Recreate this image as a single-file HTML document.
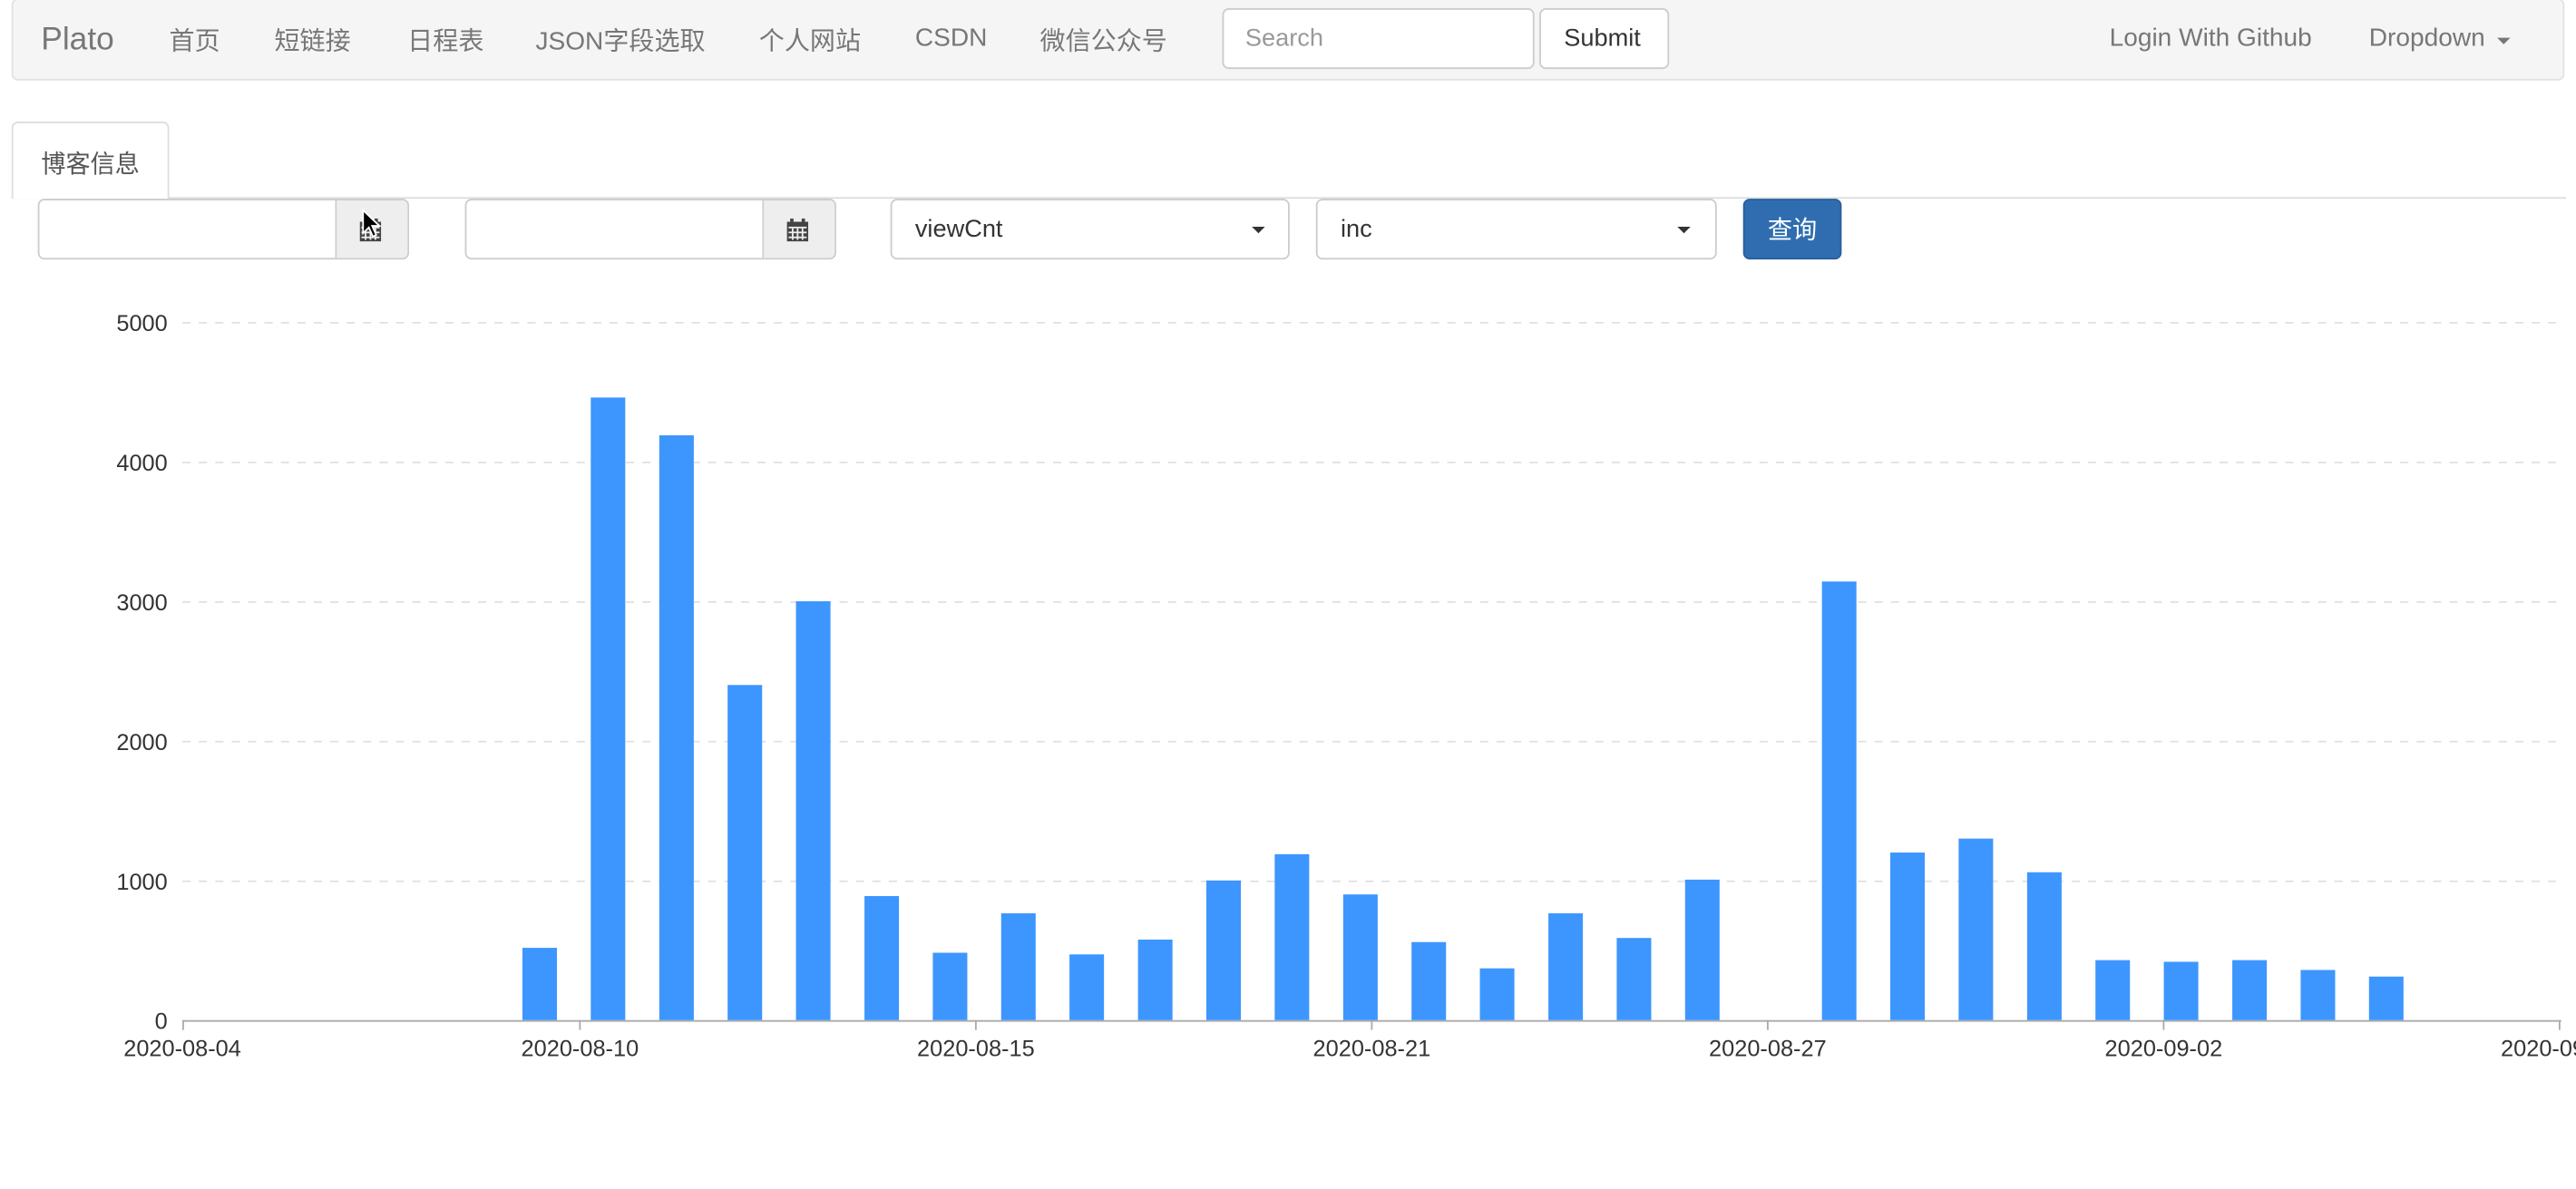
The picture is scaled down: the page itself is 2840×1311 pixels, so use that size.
<!DOCTYPE html>
<html><head><meta charset="utf-8"><style>
html,body{margin:0;padding:0;background:#fff;width:2840px;height:1310px;overflow:hidden}
#w{position:absolute;left:0;top:0;width:1568px;height:724px;transform:scale(1.81122);transform-origin:0 0;font-family:"Liberation Sans","Noto Sans CJK SC",sans-serif;color:#333}
.a{position:absolute}
.nav{left:7px;top:-1px;width:1554px;height:50px;background:#f5f5f5;border:1px solid #e2e2e2;border-radius:4px;box-sizing:border-box}
.l{position:absolute;top:13px;font-size:15.5px;color:#777;white-space:nowrap}
.lt{top:15px}
.box{position:absolute;border:1px solid #ccc;border-radius:4px;box-sizing:border-box;background:#fff}
.add{position:absolute;top:0;bottom:0;right:0;width:43px;background:#eee;border-left:1px solid #ccc;border-radius:0 3px 3px 0}
.caret{position:absolute;width:0;height:0;border-left:4px solid transparent;border-right:4px solid transparent;border-top:4px solid #333}
</style></head><body><div id="w">
<div class="a nav"></div>
<div class="l" style="left:25px;top:13px;font-size:19.5px">Plato</div>
<div class="l" style="left:103px">首页</div>
<div class="l" style="left:167px">短链接</div>
<div class="l" style="left:248px">日程表</div>
<div class="l" style="left:326px">JSON字段选取</div>
<div class="l" style="left:462px">个人网站</div>
<div class="l lt" style="left:557px">CSDN</div>
<div class="l" style="left:633px">微信公众号</div>
<div class="box" style="left:744px;top:5px;width:190px;height:37px"><span class="a" style="left:13px;top:9px;font-size:15px;color:#999">Search</span></div>
<div class="box" style="left:937px;top:5px;width:79px;height:37px"><span class="a" style="left:14px;top:9px;font-size:15px;color:#333">Submit</span></div>
<div class="l lt" style="left:1284px">Login With Github</div>
<div class="l lt" style="left:1442px">Dropdown</div>
<div class="caret" style="left:1520px;top:23px;border-top-color:#777"></div>

<div class="a" style="left:7px;top:120px;width:1555px;border-top:1px solid #ddd"></div>
<div class="a" style="left:7px;top:74px;width:96px;height:47px;background:#fff;border:1px solid #ddd;border-bottom:none;border-radius:4px 4px 0 0;box-sizing:border-box"><span class="a" style="left:17px;top:14px;font-size:15px;color:#555">博客信息</span></div>

<div class="box" style="left:23px;top:121px;width:226px;height:37px"><div class="add"><svg class="a" style="left:14px;top:11px" width="13" height="14" viewBox="0 0 13 14"><rect x="0" y="2" width="13" height="12" fill="#444"/><rect x="2" y="0" width="2" height="3" fill="#444"/><rect x="9" y="0" width="2" height="3" fill="#444"/><g fill="#eee"><rect x="1" y="5" width="11" height="1"/><rect x="3" y="6" width="1" height="7"/><rect x="6" y="6" width="1" height="7"/><rect x="9" y="6" width="1" height="7"/><rect x="1" y="8" width="11" height="1"/><rect x="1" y="11" width="11" height="1"/></g></svg><svg class="a" style="left:15px;top:5px" width="14" height="20" viewBox="0 0 14 20"><path d="M1 1 L1 15 L4.5 11.5 L7 17 L9 16 L6.5 10.5 L11 10.5 Z" fill="#000" stroke="#fff" stroke-width="1"/></svg></div></div>
<div class="box" style="left:283px;top:121px;width:226px;height:37px"><div class="add"><svg class="a" style="left:14px;top:11px" width="13" height="14" viewBox="0 0 13 14"><rect x="0" y="2" width="13" height="12" fill="#444"/><rect x="2" y="0" width="2" height="3" fill="#444"/><rect x="9" y="0" width="2" height="3" fill="#444"/><g fill="#eee"><rect x="1" y="5" width="11" height="1"/><rect x="3" y="6" width="1" height="7"/><rect x="6" y="6" width="1" height="7"/><rect x="9" y="6" width="1" height="7"/><rect x="1" y="8" width="11" height="1"/><rect x="1" y="11" width="11" height="1"/></g></svg></div></div>
<div class="box" style="left:542px;top:121px;width:243px;height:37px"><span class="a" style="left:14px;top:9px;font-size:15px">viewCnt</span><div class="caret" style="left:219px;top:16px"></div></div>
<div class="box" style="left:801px;top:121px;width:244px;height:37px"><span class="a" style="left:14px;top:9px;font-size:15px">inc</span><div class="caret" style="left:219px;top:16px"></div></div>
<div class="a" style="left:1061px;top:121px;width:60px;height:37px;background:#2f6db0;border:1px solid #2a5f9a;border-radius:4px;box-sizing:border-box"><span class="a" style="left:14px;top:7px;font-size:15px;color:#fff">查询</span></div>

<svg class="a" style="left:0;top:0" width="1568" height="724" viewBox="0 0 1568 724" font-family="Liberation Sans, sans-serif" font-size="14" fill="#333">
<g stroke="#e0e0e0" stroke-dasharray="5,5"><line x1="111" y1="196.5" x2="1560" y2="196.5"/><line x1="111" y1="281.5" x2="1560" y2="281.5"/><line x1="111" y1="366.5" x2="1560" y2="366.5"/><line x1="111" y1="451.5" x2="1560" y2="451.5"/><line x1="111" y1="536.5" x2="1560" y2="536.5"/></g>
<g text-anchor="end"><text x="102" y="201.5">5000</text><text x="102" y="286.5">4000</text><text x="102" y="371.5">3000</text><text x="102" y="456.5">2000</text><text x="102" y="541.5">1000</text><text x="102" y="626.5">0</text></g>
<line x1="111" y1="621.5" x2="1559" y2="621.5" stroke="#aaa"/>
<g stroke="#aaa"><line x1="111.5" y1="621" x2="111.5" y2="627"/><line x1="353" y1="621" x2="353" y2="627"/><line x1="594" y1="621" x2="594" y2="627"/><line x1="835" y1="621" x2="835" y2="627"/><line x1="1076" y1="621" x2="1076" y2="627"/><line x1="1317" y1="621" x2="1317" y2="627"/><line x1="1558" y1="621" x2="1558" y2="627"/></g>
<g text-anchor="middle"><text x="111" y="643">2020-08-04</text><text x="353" y="643">2020-08-10</text><text x="594" y="643">2020-08-15</text><text x="835" y="643">2020-08-21</text><text x="1076" y="643">2020-08-27</text><text x="1317" y="643">2020-09-02</text><text x="1558" y="643">2020-09-08</text></g>
<g fill="#3d96fe">
<rect x="318" y="577" width="21" height="44"/>
<rect x="359.6" y="242" width="21" height="379"/>
<rect x="401.3" y="265" width="21" height="356"/>
<rect x="442.9" y="417" width="21" height="204"/>
<rect x="484.5" y="366" width="21" height="255"/>
<rect x="526.2" y="545.5" width="21" height="75.5"/>
<rect x="567.8" y="580" width="21" height="41"/>
<rect x="609.4" y="556" width="21" height="65"/>
<rect x="651" y="581" width="21" height="40"/>
<rect x="692.7" y="572" width="21" height="49"/>
<rect x="734.3" y="536" width="21" height="85"/>
<rect x="775.9" y="520" width="21" height="101"/>
<rect x="817.6" y="544.5" width="21" height="76.5"/>
<rect x="859.2" y="573.5" width="21" height="47.5"/>
<rect x="900.8" y="589.5" width="21" height="31.5"/>
<rect x="942.5" y="556" width="21" height="65"/>
<rect x="984.1" y="571" width="21" height="50"/>
<rect x="1025.7" y="535.5" width="21" height="85.5"/>
<rect x="1109" y="354" width="21" height="267"/>
<rect x="1150.6" y="519" width="21" height="102"/>
<rect x="1192.2" y="510.5" width="21" height="110.5"/>
<rect x="1233.9" y="531" width="21" height="90"/>
<rect x="1275.5" y="584.5" width="21" height="36.5"/>
<rect x="1317.1" y="585.5" width="21" height="35.5"/>
<rect x="1358.8" y="584.5" width="21" height="36.5"/>
<rect x="1400.4" y="590.5" width="21" height="30.5"/>
<rect x="1442" y="594.5" width="21" height="26.5"/>
</g>
</svg>
</div></body></html>
